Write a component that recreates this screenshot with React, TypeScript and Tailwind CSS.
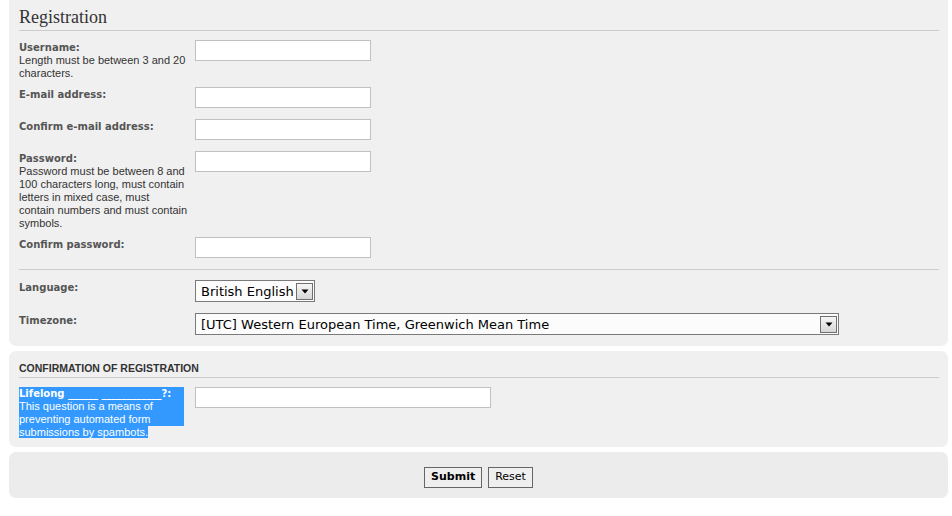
import React from "react";

const labelFont = { fontFamily: '"DejaVu Sans", Verdana, sans-serif' };
const smallFont = { fontFamily: '"Liberation Sans", Arial, sans-serif' };

function TextInput({ wide = false }: { wide?: boolean }) {
  return (
    <input
      type="text"
      className={`block h-[21px] border border-[#c0c0c0] bg-white px-1 text-[12px] outline-none ${
        wide ? "w-[296px]" : "w-[176px]"
      }`}
    />
  );
}

function Arrow() {
  return (
    <span className="flex h-[17px] w-[17px] items-center justify-center border border-[#6f6f6f] bg-gradient-to-b from-[#f6f6f6] to-[#d6d6d6]">
      <svg width="8" height="5" viewBox="0 0 8 5">
        <path d="M0.5 0.5 H7.5 L4 4.5 Z" fill="#000" />
      </svg>
    </span>
  );
}

function FakeSelect({ value, wide = false }: { value: string; wide?: boolean }) {
  return (
    <div
      className={`flex h-[22px] items-center justify-between border border-[#7a7a7a] bg-[#fcfcfc] pl-[5px] pr-[1px] text-[13px] text-black ${
        wide ? "w-[644px]" : "w-[120px]"
      }`}
      style={labelFont}
    >
      <span className="whitespace-nowrap leading-none">{value}</span>
      <Arrow />
    </div>
  );
}

function Row({
  label,
  lines = [],
  children,
  tall = false,
}: {
  label: string;
  lines?: string[];
  children: React.ReactNode;
  tall?: boolean;
}) {
  return (
    <div className={`mb-[7px] flex ${tall ? "min-h-[26px]" : "min-h-[25px]"}`}>
      <div className="w-[176px] shrink-0 pr-[11px] pt-[1px]">
        <div className="text-[10px] font-bold leading-[13px] text-[#555]" style={labelFont}>
          {label}
        </div>
        {lines.map((l) => (
          <div key={l} className="whitespace-nowrap text-[11px] leading-[13px] text-[#333]" style={smallFont}>
            {l}
          </div>
        ))}
      </div>
      <div>{children}</div>
    </div>
  );
}

export default function App() {
  return (
    <div className="min-h-[516px] w-[952px] bg-white px-[9px] pr-[4px]">
      {/* Registration panel */}
      <div className="rounded-b-[7px] bg-[#f0f0f0] px-[10px] pr-[9px]">
        <h2
          className="border-b border-[#cccccc] pb-[3px] pt-[7px] text-[18px] font-normal leading-[20px] text-[#333]"
          style={{ fontFamily: '"Liberation Serif", Georgia, serif' }}
        >
          Registration
        </h2>
        <div className="pt-[9px]">
          <Row label="Username:" lines={["Length must be between 3 and 20", "characters."]}>
            <TextInput />
          </Row>
          <Row label="E-mail address:">
            <TextInput />
          </Row>
          <Row label="Confirm e-mail address:">
            <TextInput />
          </Row>
          <Row
            label="Password:"
            lines={[
              "Password must be between 8 and",
              "100 characters long, must contain",
              "letters in mixed case, must",
              "contain numbers and must contain",
              "symbols.",
            ]}
          >
            <TextInput />
          </Row>
          <Row label="Confirm password:">
            <TextInput />
          </Row>
        </div>
        <div className="mt-[2px] border-t border-[#cccccc] pt-[10px]">
          <Row label="Language:" tall>
            <FakeSelect value="British English" />
          </Row>
          <div className="-mb-[7px]">
            <Row label="Timezone:" tall>
              <FakeSelect value="[UTC] Western European Time, Greenwich Mean Time" wide />
            </Row>
          </div>
          <div className="h-[7px]" />
        </div>
      </div>

      {/* Confirmation panel */}
      <div className="mt-[5px] rounded-[7px] bg-[#f0f0f0] px-[10px] pb-[8px] pr-[9px] pt-[10px]">
        <h3
          className="border-b border-[#cccccc] pb-[2px] text-[10.5px] font-bold uppercase leading-[14px] text-[#333]"
          style={smallFont}
        >
          Confirmation of registration
        </h3>
        <div className="mt-[9px] flex">
          <div className="w-[176px] shrink-0 pr-[11px]">
            <div className="bg-[#3399ff] text-white">
              <div className="text-[10px] font-bold leading-[13px]" style={labelFont}>
                Lifelong ______ ____________?:
              </div>
              <div className="whitespace-nowrap text-[11px] leading-[13px]" style={smallFont}>
                This question is a means of
                <br />
                preventing automated form
              </div>
            </div>
            <div className="whitespace-nowrap text-[11px] leading-[13px]" style={smallFont}>
              <span className="bg-[#3399ff] text-white">submissions by spambots.</span>
            </div>
          </div>
          <div>
            <TextInput wide />
          </div>
        </div>
      </div>

      {/* Submit panel */}
      <div className="mt-[5px] flex justify-center gap-[6px] rounded-[7px] bg-[#ececec] pb-[10px] pt-[15px]">
        <button
          className="h-[21px] border border-[#666] bg-[#efefef] px-[6px] text-[11px] font-bold text-black"
          style={labelFont}
        >
          Submit
        </button>
        <button
          className="h-[21px] border border-[#666] bg-[#efefef] px-[6px] text-[11px] text-black"
          style={labelFont}
        >
          Reset
        </button>
      </div>
    </div>
  );
}
